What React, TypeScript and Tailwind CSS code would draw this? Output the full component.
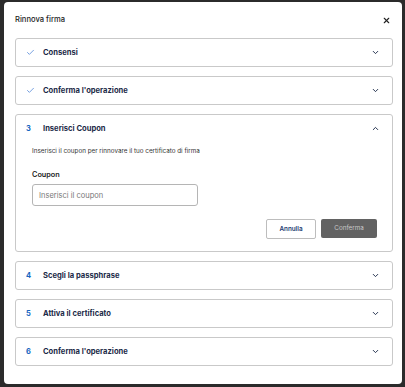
import { Check, ChevronDown, ChevronUp, X } from "lucide-react";

const steps = [
  { key: "1", done: true, title: "Consensi" },
  { key: "2", done: true, title: "Conferma l'operazione" },
  { key: "3", done: false, title: "Inserisci Coupon", open: true },
  { key: "4", done: false, title: "Scegli la passphrase" },
  { key: "5", done: false, title: "Attiva il certificato" },
  { key: "6", done: false, title: "Conferma l'operazione" },
];

const StepHeader = ({ step }: { step: (typeof steps)[number] }) => (
  <div className="flex h-[27px] items-center pl-[10px] pr-[12px]">
    <div className="flex w-[17px] items-center">
      {step.done ? (
        <Check className="h-[9px] w-[9px] text-[#2f6fd0]" strokeWidth={1.75} />
      ) : (
        <span className="text-[7.5px] font-bold text-[#1565c0]">{step.key}</span>
      )}
    </div>
    <span className="flex-1 text-[7.6px] font-bold text-[#1b2a47]">{step.title}</span>
    {step.open ? (
      <ChevronUp className="h-[9px] w-[9px] text-[#1b2a47]" strokeWidth={2.5} />
    ) : (
      <ChevronDown className="h-[9px] w-[9px] text-[#1b2a47]" strokeWidth={2.5} />
    )}
  </div>
);

export default function App() {
  return (
    <div
      className="h-[387px] w-[405px] bg-[#2b2b2b] pl-[4px] pr-[3px] pt-[2px]"
      style={{ fontFamily: "Inter, 'Noto Sans', sans-serif" }}
    >
      <div className="h-[382px] w-[398px] rounded-[4px] bg-white pl-[11px] pr-[9px]">
        {/* Header */}
        <div className="flex h-[36px] items-center justify-between pr-[2px]">
          <span className="text-[7.6px] font-medium text-[#222]">Rinnova firma</span>
          <X className="h-[9px] w-[9px] text-[#222]" strokeWidth={3} />
        </div>

        {/* Steps */}
        <div className="flex flex-col gap-[9px]">
          {steps.map((step) => (
            <div key={step.key} className="rounded-[3px] border border-[#c9c9c9]">
              <StepHeader step={step} />
              {step.open && (
                <div className="pb-[12px] pl-[16px] pr-[15px]">
                  <p className="mt-[5px] text-[6.3px] text-[#333]">
                    Inserisci il coupon per rinnovare il tuo certificato di firma
                  </p>
                  <div className="mt-[14px] text-[7.3px] font-semibold text-[#222]">Coupon</div>
                  <div className="mt-[3px] flex h-[22px] w-[166px] items-center rounded-[3px] border border-[#b5b5b5] px-[6px] text-[7.5px] text-[#777]">
                    Inserisci il coupon
                  </div>
                  <div className="mt-[13px] flex justify-end gap-[5px]">
                    <div className="flex h-[20px] w-[50px] items-center justify-center rounded-[2px] border border-[#bdbdbd] text-[6.3px] font-semibold text-[#1b3a70]">
                      Annulla
                    </div>
                    <div className="flex h-[19px] w-[56px] items-center justify-center rounded-[2px] bg-[#626262] text-[6.3px] text-[#c8c8c8]">
                      Conferma
                    </div>
                  </div>
                </div>
              )}
            </div>
          ))}
        </div>
      </div>
    </div>
  );
}
